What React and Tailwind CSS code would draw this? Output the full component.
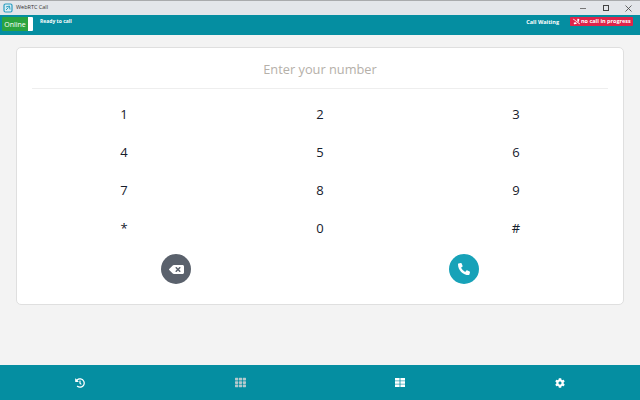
import React from 'react';
import { FaHistory, FaTh, FaCog, FaPhoneAlt, FaBackspace, FaPhoneSlash } from 'react-icons/fa';

const KEYS = ['1', '2', '3', '4', '5', '6', '7', '8', '9', '*', '0', '#'];

function AppLogo() {
  return (
    <svg width="10" height="10" viewBox="0 0 10 10" className="ml-[3px]">
      <rect x="1" y="1" width="8" height="8" rx="1.5" fill="#d8eef4" stroke="#2a9cc0" strokeWidth="1.2" />
      <path d="M3 4 L6.5 3 L7 6.5 M3 7 L5.5 4.5" stroke="#2a9cc0" strokeWidth="1" fill="none" />
    </svg>
  );
}

function TableIcon() {
  return (
    <svg width="10" height="9" viewBox="0 0 10 9" fill="#fff">
      <rect x="0" y="0" width="4.6" height="2.6" />
      <rect x="5.4" y="0" width="4.6" height="2.6" />
      <rect x="0" y="3.2" width="4.6" height="2.6" />
      <rect x="5.4" y="3.2" width="4.6" height="2.6" />
      <rect x="0" y="6.4" width="4.6" height="2.6" />
      <rect x="5.4" y="6.4" width="4.6" height="2.6" />
    </svg>
  );
}

export default function App() {
  return (
    <div className="flex flex-col w-[640px] h-[400px] overflow-hidden bg-[#f3f3f3] font-['Open_Sans',sans-serif]">
      {/* Window title bar */}
      <div className="flex items-center h-[15px] shrink-0 bg-[#e3e6ea] border-t border-[#a9abad]">
        <AppLogo />
        <span className="ml-[3px] text-[5.5px] leading-none text-[#333]">WebRTC Call</span>
        <div className="ml-auto flex items-center">
          <div className="w-[23px] flex justify-center"><div className="w-[6px] h-px bg-[#777]" /></div>
          <div className="w-[23px] flex justify-center"><div className="w-[6px] h-[6px] border border-[#444]" /></div>
          <div className="w-[23px] flex justify-center">
            <svg width="7" height="7" viewBox="0 0 7 7"><path d="M0.5 0.5 L6.5 6.5 M6.5 0.5 L0.5 6.5" stroke="#444" strokeWidth="0.8" /></svg>
          </div>
        </div>
      </div>

      {/* Status bar */}
      <div className="flex items-start h-[20px] shrink-0 bg-[#058ea1]">
        <div className="flex ml-[2px] mt-[2px] h-[14px] w-[31px] rounded-[1px] overflow-hidden">
          <div className="flex-1 flex items-center justify-center bg-[#2aa33f] text-[7px] leading-none text-white">Online</div>
          <div className="w-[5px] bg-white" />
        </div>
        <span className="ml-[7px] mt-[2px] text-[5px] leading-[8px] font-bold text-white">Ready to call</span>
        <span className="ml-auto mt-[3px] text-[5.5px] leading-[8px] font-bold text-white">Call Waiting</span>
        <div className="flex items-center gap-[1px] ml-[11px] mr-[7px] mt-[2px] h-[9px] w-[63px] pl-[3px] rounded-[1px] bg-[#e0244a] text-[5.5px] font-bold leading-none text-white">
          <FaPhoneSlash size={7} />
          <span>no call in progress</span>
        </div>
      </div>

      {/* Dial pad */}
      <div className="flex-1 px-4 pt-3">
        <div className="h-[258px] bg-white border border-[#dfdfdf] rounded-[5px]">
          <div className="flex items-center justify-center h-[41px] mx-[15px] pt-[4px] border-b border-[#eeeeee] text-[12.8px] text-[#b5b0a9]">
            Enter your number
          </div>
          <div className="grid grid-cols-3 px-[9px] pt-[7px]">
            {KEYS.map(k => (
              <div key={k} className="flex items-center justify-center h-[38px] text-[13px] text-[#16202c]">{k}</div>
            ))}
          </div>
          <div className="flex px-[15px] pt-[6px]">
            <div className="flex-1 flex justify-center">
              <div className="flex items-center justify-center w-[30px] h-[30px] rounded-full bg-[#5a616c] text-white">
                <FaBackspace size={15} />
              </div>
            </div>
            <div className="flex-1 flex justify-center">
              <div className="flex items-center justify-center w-[30px] h-[30px] rounded-full bg-[#17a2b8] text-white">
                <FaPhoneAlt size={12} />
              </div>
            </div>
          </div>
        </div>
      </div>

      {/* Bottom nav */}
      <div className="grid grid-cols-4 h-[35px] shrink-0 bg-[#058ea1] text-white">
        <div className="flex items-center justify-center"><FaHistory size={10} /></div>
        <div className="flex items-center justify-center text-[#b4c9cd]"><FaTh size={11} /></div>
        <div className="flex items-center justify-center"><TableIcon /></div>
        <div className="flex items-center justify-center"><FaCog size={10} /></div>
      </div>
    </div>
  );
}
